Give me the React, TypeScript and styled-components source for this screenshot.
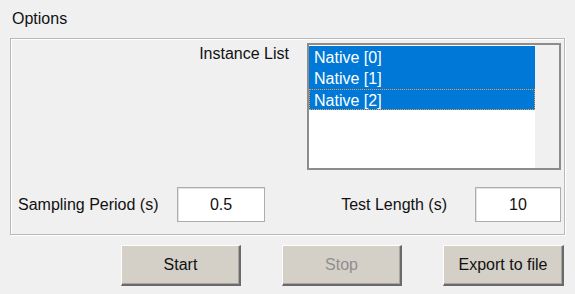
import styled, { createGlobalStyle } from 'styled-components';

const GlobalStyle = createGlobalStyle`
  html, body {
    margin: 0;
    padding: 0;
    background: #f0f0f0;
  }
  body {
    font-family: "Liberation Sans", Arial, sans-serif;
    font-size: 16px;
    color: #111;
  }
`;

const Window = styled.div`
  width: 575px;
  height: 294px;
  overflow: hidden;
  background: #f0f0f0;
`;

const Title = styled.div`
  margin: 10px 0 0 12px;
  height: 28px;
  line-height: 18px;
`;

const Panel = styled.div`
  margin-left: 10px;
  width: 553px;
  height: 195px;
  border: 1px solid #b9b9b9;
  box-shadow: inset 1px 1px 0 #ffffff, 1px 1px 0 #ffffff;
  display: flex;
  flex-direction: column;
`;

const TopRow = styled.div`
  display: flex;
  justify-content: flex-end;
  gap: 18px;
  padding: 4px 3px 0 0;
`;

const Label = styled.div`
  line-height: 18px;
  white-space: nowrap;
`;

const ListLabel = styled(Label)`
  margin-top: 2px;
`;

const ListBox = styled.div`
  width: 250px;
  height: 123px;
  border: 2px solid #8c8c8c;
  display: flex;
  background: #fff;
`;

const Items = styled.div`
  flex: 1;
  display: flex;
  flex-direction: column;
  padding-top: 1px;
`;

const Item = styled.div<{ $selected?: boolean; $focused?: boolean }>`
  height: 21.3px;
  line-height: 21px;
  padding-left: 4px;
  box-sizing: border-box;
  color: ${(p) => (p.$selected ? '#fff' : '#111')};
  background: ${(p) => (p.$selected ? '#0078d7' : 'transparent')};
  border: 1px ${(p) => (p.$focused ? 'dotted #f0a040' : 'solid transparent')};
`;

const Track = styled.div`
  width: 24px;
  background: #f0f0f0;
`;

const BottomRow = styled.div`
  display: grid;
  grid-template-columns: 159px 88px 1fr 86px;
  align-items: center;
  padding: 0 3px 0 7px;
  margin-top: 17px;
`;

const RightLabel = styled(Label)`
  justify-self: end;
  margin-right: 28px;
`;

const Field = styled.div`
  height: 35px;
  box-sizing: border-box;
  background: #fff;
  border: 1px solid #adadad;
  box-shadow: inset 1px 1px 0 #e3e3e3;
  display: flex;
  align-items: center;
  justify-content: center;
  line-height: 18px;
`;

const ButtonRow = styled.div`
  display: flex;
  gap: 41px;
  padding-left: 121px;
  margin-top: 10px;
`;

const Button = styled.div<{ $disabled?: boolean; $width?: number }>`
  width: ${(p) => p.$width ?? 120}px;
  height: 41px;
  box-sizing: border-box;
  background: #d4d0c8;
  border-top: 1px solid #fdfdfd;
  border-left: 1px solid #fdfdfd;
  border-right: 2px solid #6a6a6a;
  border-bottom: 2px solid #6a6a6a;
  box-shadow: inset -1px -1px 0 #a8a5a0;
  display: flex;
  align-items: center;
  justify-content: center;
  color: ${(p) => (p.$disabled ? '#8f8f8f' : '#111')};
`;

const instances = ['Native [0]', 'Native [1]', 'Native [2]'];

export default function App() {
  return (
    <Window>
      <GlobalStyle />
      <Title>Options</Title>
      <Panel>
        <TopRow>
          <ListLabel>Instance List</ListLabel>
          <ListBox>
            <Items>
              {instances.map((name, i) => (
                <Item key={name} $selected $focused={i === instances.length - 1}>
                  {name}
                </Item>
              ))}
            </Items>
            <Track />
          </ListBox>
        </TopRow>
        <BottomRow>
          <Label>Sampling Period (s)</Label>
          <Field>0.5</Field>
          <RightLabel>Test Length (s)</RightLabel>
          <Field>10</Field>
        </BottomRow>
      </Panel>
      <ButtonRow>
        <Button>Start</Button>
        <Button $disabled>Stop</Button>
        <Button $width={121}>Export to file</Button>
      </ButtonRow>
    </Window>
  );
}
